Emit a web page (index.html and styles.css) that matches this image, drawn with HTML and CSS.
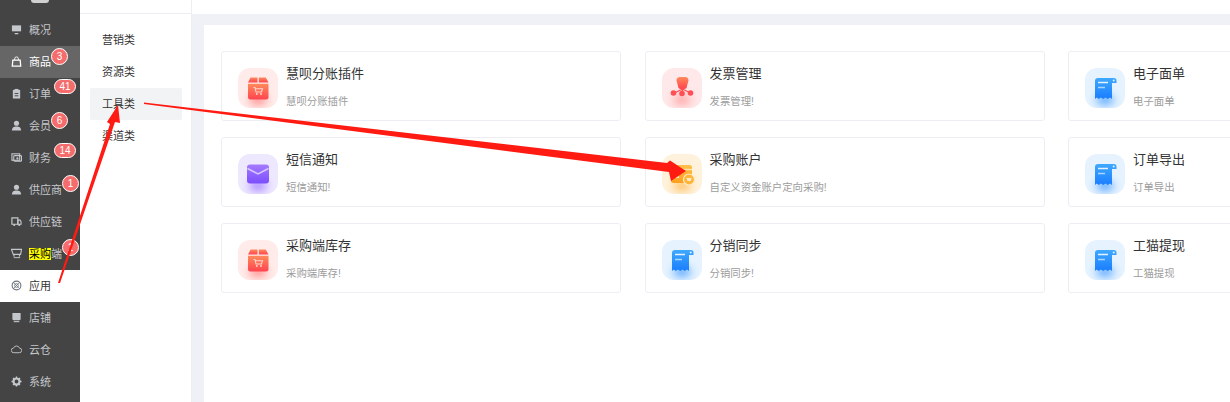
FILE: index.html
```html
<!DOCTYPE html>
<html lang="zh">
<head>
<meta charset="utf-8">
<title>应用</title>
<link rel="stylesheet" href="styles.css">
</head>
<body>
<div class="app">
  <aside class="side">
    <div class="logo"><span class="logo-disc"></span></div>
    <a class="nav"><svg class="ni" viewBox="0 0 12 12"><path d="M1 1.5h10v6.500H1z" fill="currentColor"/><path d="M4 10.500h4" stroke="currentColor" stroke-width="1.4"/></svg><span>概况</span></a>
    <a class="nav hover"><svg class="ni" viewBox="0 0 12 12"><path d="M2 4.500h8l.6 6.500H1.400z" fill="none" stroke="currentColor" stroke-width="1.400"/><path d="M4 4.500V3a2 2 0 0 1 4 0v1.500" fill="none" stroke="currentColor"/></svg><span>商品</span><b class="badge b1">3</b></a>
    <a class="nav"><svg class="ni" viewBox="0 0 12 12"><path d="M2 2h8v9.500H2z" fill="currentColor"/><path d="M4 1h4v2H4z" fill="currentColor"/><path d="M4 6h4M4 8.500h4" stroke="#444" stroke-width="1"/></svg><span>订单</span><b class="badge b2">41</b></a>
    <a class="nav"><svg class="ni" viewBox="0 0 12 12"><circle cx="6" cy="3.500" r="2.800" fill="currentColor"/><path d="M1 11.500c0-3.500 2-4.500 5-4.500s5 1 5 4.500z" fill="currentColor"/></svg><span>会员</span><b class="badge b1">6</b></a>
    <a class="nav"><svg class="ni" viewBox="0 0 12 12"><rect x="1" y="2" width="8.500" height="7" fill="none" stroke="currentColor" stroke-width="1.200"/><rect x="3" y="4" width="8.500" height="6" rx="1" fill="none" stroke="currentColor" stroke-width="1.200"/><circle cx="7" cy="7" r="1.200" fill="currentColor"/></svg><span>财务</span><b class="badge b2">14</b></a>
    <a class="nav"><svg class="ni" viewBox="0 0 12 12"><circle cx="6" cy="3.500" r="2.800" fill="currentColor"/><path d="M1 11.500c0-3.500 2-4.500 5-4.500s5 1 5 4.500z" fill="currentColor"/></svg><span>供应商</span><b class="badge b3">1</b></a>
    <a class="nav"><svg class="ni" viewBox="0 0 12 12"><path d="M1 2h6.500v7H1z" fill="none" stroke="currentColor" stroke-width="1.300"/><path d="M7.500 4.500H10l1 2V9H7.500z" fill="none" stroke="currentColor" stroke-width="1.200"/><circle cx="3.500" cy="9.800" r="1.200" fill="currentColor"/><circle cx="9" cy="9.800" r="1.200" fill="currentColor"/></svg><span>供应链</span></a>
    <a class="nav"><svg class="ni" viewBox="0 0 12 12"><path d="M.5 1.500h11l-1 5.500h-8z" fill="none" stroke="currentColor" stroke-width="1.200"/><path d="M3 7l.5 2.500M9.500 7 9 9.500" stroke="currentColor" stroke-width="1.200"/><path d="M3 10.500h7" stroke="currentColor"/></svg><span><mark class="mark">采购</mark>端</span><b class="badge b3">1</b></a>
    <a class="nav on"><svg class="ni" viewBox="0 0 12 12"><circle cx="6" cy="6" r="4.800" fill="none" stroke="currentColor" stroke-width="1.200"/><circle cx="6" cy="6" r="2" fill="none" stroke="currentColor"/><path d="M2.500 2.500l7 7M9.500 2.500l-7 7" stroke="currentColor" stroke-width=".8"/></svg><span>应用</span></a>
    <a class="nav"><svg class="ni" viewBox="0 0 12 12"><path d="M1.500 1h9v6.500a1.500 1.500 0 0 1-1.500 1.500H3a1.500 1.500 0 0 1-1.500-1.500z" fill="currentColor"/><path d="M3 10.500h6" stroke="currentColor" stroke-width="1.200"/></svg><span>店铺</span></a>
    <a class="nav"><svg class="ni" viewBox="0 0 12 12"><path d="M3 9.500a2.500 2.500 0 0 1-.3-5A3.500 3.500 0 0 1 9.300 4.500 2.500 2.500 0 0 1 9 9.500z" fill="none" stroke="currentColor" stroke-width="1"/></svg><span>云仓</span></a>
    <a class="nav"><svg class="ni" viewBox="0 0 12 12"><circle cx="6" cy="6" r="3.300" fill="none" stroke="currentColor" stroke-width="2.400"/><path d="M6 .5v2M6 9.500v2M.5 6h2M9.500 6h2M2.200 2.200l1.400 1.400M8.400 8.400l1.400 1.400M9.800 2.200 8.400 3.600M3.600 8.400 2.200 9.800" stroke="currentColor" stroke-width="1.500"/></svg><span>系统</span></a>
  </aside>

  <nav class="sub">
    <div class="sub-top"></div>
    <ul class="sub-list">
      <li class="sub-item">营销类</li>
      <li class="sub-item">资源类</li>
      <li class="sub-item sel">工具类</li>
      <li class="sub-item">渠道类</li>
    </ul>
  </nav>

  <main class="main">
    <div class="top"></div>
    <section class="panel">
      <div class="grid">
        <article class="card"><span class="ic red"><svg viewBox="0 0 40 40"><use href="#box"/></svg></span><div class="tx"><h3>慧呗分账插件</h3><p>慧呗分账插件</p></div></article>
        <article class="card"><span class="ic rose"><svg viewBox="0 0 40 40"><use href="#tree"/></svg></span><div class="tx"><h3>发票管理</h3><p>发票管理!</p></div></article>
        <article class="card"><span class="ic blue"><svg viewBox="0 0 40 40"><use href="#bill"/></svg></span><div class="tx"><h3>电子面单</h3><p>电子面单</p></div></article>
        <article class="card"><span class="ic purple"><svg viewBox="0 0 40 40"><use href="#mail"/></svg></span><div class="tx"><h3>短信通知</h3><p>短信通知!</p></div></article>
        <article class="card"><span class="ic orange"><svg viewBox="0 0 40 40"><use href="#wallet"/></svg></span><div class="tx"><h3>采购账户</h3><p>自定义资金账户定向采购!</p></div></article>
        <article class="card"><span class="ic blue"><svg viewBox="0 0 40 40"><use href="#bill"/></svg></span><div class="tx"><h3>订单导出</h3><p>订单导出</p></div></article>
        <article class="card"><span class="ic red"><svg viewBox="0 0 40 40"><use href="#box"/></svg></span><div class="tx"><h3>采购端库存</h3><p>采购端库存!</p></div></article>
        <article class="card"><span class="ic blue"><svg viewBox="0 0 40 40"><use href="#bill"/></svg></span><div class="tx"><h3>分销同步</h3><p>分销同步!</p></div></article>
        <article class="card"><span class="ic blue"><svg viewBox="0 0 40 40"><use href="#bill"/></svg></span><div class="tx"><h3>工猫提现</h3><p>工猫提现</p></div></article>
      </div>
    </section>
  </main>
</div>

<svg class="defs" width="0" height="0" aria-hidden="true">
  <defs>
    <linearGradient id="gr" x1="0" y1="0" x2="0" y2="1"><stop offset="0" stop-color="#ff8a5c"/><stop offset="1" stop-color="#ff444f"/></linearGradient>
    <linearGradient id="gb" x1="0" y1="0" x2="0" y2="1"><stop offset="0" stop-color="#3fa9ff"/><stop offset="1" stop-color="#1a7dff"/></linearGradient>
    <linearGradient id="gp" x1="0" y1="0" x2="0" y2="1"><stop offset="0" stop-color="#a57bff"/><stop offset="1" stop-color="#7b4dff"/></linearGradient>
    <linearGradient id="go" x1="0" y1="0" x2="0" y2="1"><stop offset="0" stop-color="#ffc04a"/><stop offset="1" stop-color="#ff9f1c"/></linearGradient>
    <g id="box">
      <path d="M10 14.500 12.500 9.500h7v5z" fill="url(#gr)"/>
      <path d="M20.800 9.500h7l2.700 5h-9.700z" fill="url(#gr)"/>
      <path d="M10 15.800h20.500V29a2.500 2.500 0 0 1-2.500 2.500H12.500A2.500 2.500 0 0 1 10 29z" fill="url(#gr)"/>
      <path d="M15.500 19.500h1.500l1 4.500h5.500l1-3.300h-6.800" fill="none" stroke="#ffd8d0" stroke-width="1.100"/>
      <circle cx="18.800" cy="26" r=".9" fill="#ffd8d0"/><circle cx="23" cy="26" r=".9" fill="#ffd8d0"/>
    </g>
    <g id="tree">
      <path d="M18 9h5a3.500 3.500 0 0 1 3.500 3.500L25 18a3 3 0 0 1-3 3h-3a3 3 0 0 1-3-3l-1.500-5.500A3.500 3.500 0 0 1 18 9z" fill="url(#gr)"/>
      <path d="M20.500 20v5M20.500 21l-8 4M20.500 21l8 4" stroke="#ff4f55" stroke-width="1.300" fill="none"/>
      <circle cx="11.500" cy="25" r="2.800" fill="#ff4f55"/><circle cx="20" cy="25.500" r="2.800" fill="#ff4f55"/><circle cx="28.500" cy="25" r="2.800" fill="#ff4f55"/>
    </g>
    <g id="bill">
      <path d="M10 13a3 3 0 0 1 3-3h16a2.500 2.500 0 0 1 2.500 2.500V15H27v16l-2-1.500-2.200 1.500-2.300-1.500-2.300 1.500-2.300-1.500-2.200 1.500-2-1.500-1.700 1.500z" fill="url(#gb)"/>
      <path d="M13 14.500h10" stroke="#e4f2ff" stroke-width="1.500"/>
      <path d="M13 19.500h7" stroke="#a6d6ff" stroke-width="1.500"/>
      <circle cx="28.700" cy="12.500" r="1" fill="#e4f2ff"/>
    </g>
    <g id="mail">
      <rect x="9" y="10.500" width="22" height="19" rx="3" fill="url(#gp)"/>
      <path d="M9.500 14.500 20 20l10.500-5.500" fill="none" stroke="#d9c8ff" stroke-width="1.500"/>
    </g>
    <g id="wallet">
      <rect x="9" y="11" width="21" height="18" rx="2.500" fill="url(#go)"/>
      <path d="M9 15.500h21" stroke="#ffe3a8" stroke-width="1.500"/>
      <path d="M12 23h5" stroke="#fff" stroke-width="1.500"/>
      <circle cx="27" cy="25.500" r="5.500" fill="#ffb43a" stroke="#ffecc8" stroke-width="1.200"/>
      <path d="M24.500 24h5l-.7 3h-3.400z" fill="#ffecc8"/>
    </g>
  </defs>
</svg>

<svg class="arrows" viewBox="0 0 1230 402" aria-hidden="true">
  <path d="M58 283 110 124 107 122 118 105 120 123 115 122 60 283z" fill="#ff1a12"/>
  <path d="M144 102.500 667 163 670 160.500 686 171 671 181 669 172 144 104z" fill="#ff1a12"/>
</svg>
</body>
</html>
```

FILE: styles.css
```css
* { box-sizing: border-box; }
html, body { margin: 0; padding: 0; }
body {
  width: 1230px;
  height: 402px;
  overflow: hidden;
  position: relative;
  background: #fff;
  font-family: "Liberation Sans", "Noto Sans CJK SC", sans-serif;
}
.app { display: flex; height: 402px; }

.side {
  width: 80px;
  flex: none;
  background: #444;
  color: #b9bec4;
  font-size: 11px;
  overflow: hidden;
}
.logo { height: 14px; display: flex; justify-content: center; align-items: flex-start; }
.logo-disc { width: 18px; height: 3px; background: #d0d0d0; border-radius: 0 0 9px 9px; }
.nav {
  position: relative;
  height: 32px;
  display: flex;
  align-items: center;
  gap: 7px;
  padding: 0 0 2px 11px;
  color: #c4c7cb;
}
.ni { width: 11px; height: 11px; flex: none; }
.nav.hover { background: #666; color: #fff; }
.nav.on { background: #fff; color: #333; }
.nav.on .ni { color: #6e7780; }
.mark { background: #ff0; color: #000; }

.badge {
  position: absolute;
  height: 17px;
  width: 17px;
  line-height: 15px;
  border: 1px solid #fff;
  border-radius: 9px;
  background: #f56c6c;
  color: #fff;
  font-size: 10px;
  font-weight: 400;
  text-align: center;
}
.b1 { left: 51px; top: 1.5px; }
.b2 { left: 54px; top: 0.5px; width: 22px; height: 15px; line-height: 13px; }
.b3 { left: 62px; top: 1px; }

.sub { width: 112px; flex: none; border-right: 1px solid #eceef1; background: #fff; }
.sub-top { height: 14px; border-bottom: 1px solid #eceef1; }
.sub-list { list-style: none; margin: 0; padding: 10px 9px 0 10px; }
.sub-item {
  height: 32px;
  line-height: 32px;
  padding-left: 12px;
  font-size: 11px;
  color: #333;
  border-radius: 2px;
}
.sub-item.sel { background: #f2f3f5; }

.main { flex: 1; min-width: 0; background: #eff1f6; display: flex; flex-direction: column; overflow: hidden; }
.top { height: 14px; background: #fff; flex: none; }
.panel { flex: 1; margin: 11px 0 0 12px; background: #fff; padding: 26px 0 0 17px; }
.grid {
  display: grid;
  grid-template-columns: repeat(3, 400px);
  column-gap: 23.5px;
  row-gap: 16px;
}
.card {
  height: 70px;
  display: flex;
  gap: 8px;
  padding: 16px 0 0 16px;
  border: 1px solid #eceef4;
  border-radius: 3px;
  background: #fff;
}
.ic { width: 40px; height: 40px; flex: none; border-radius: 12px; display: block; position: relative; overflow: hidden; }
.ic svg { display: block; width: 40px; height: 40px; position: relative; }
.ic::before {
  content: "";
  position: absolute;
  left: 11px;
  right: 11px;
  bottom: 3px;
  height: 10px;
  border-radius: 50%;
  filter: blur(4px);
}
.red { background: #ffecea; }
.red::before { background: #ff8f8c; }
.rose { background: #ffe8e9; }
.rose::before { background: #ffa5a5; }
.blue { background: #e6f3ff; }
.blue::before { background: #5aa8ff; }
.purple { background: #eee8ff; }
.purple::before { background: #a884ff; }
.orange { background: #fff2dc; }
.orange::before { background: #ffc062; }
.tx { min-width: 0; }
.tx h3 { margin: -3px 0 0; font-size: 13px; line-height: 18px; font-weight: 400; color: #333; }
.tx p { margin: 12px 0 0; font-size: 10.4px; line-height: 14px; color: #9c9c9c; }

.defs { position: absolute; }
.arrows { position: absolute; left: 0; top: 0; width: 1230px; height: 402px; pointer-events: none; }
```
